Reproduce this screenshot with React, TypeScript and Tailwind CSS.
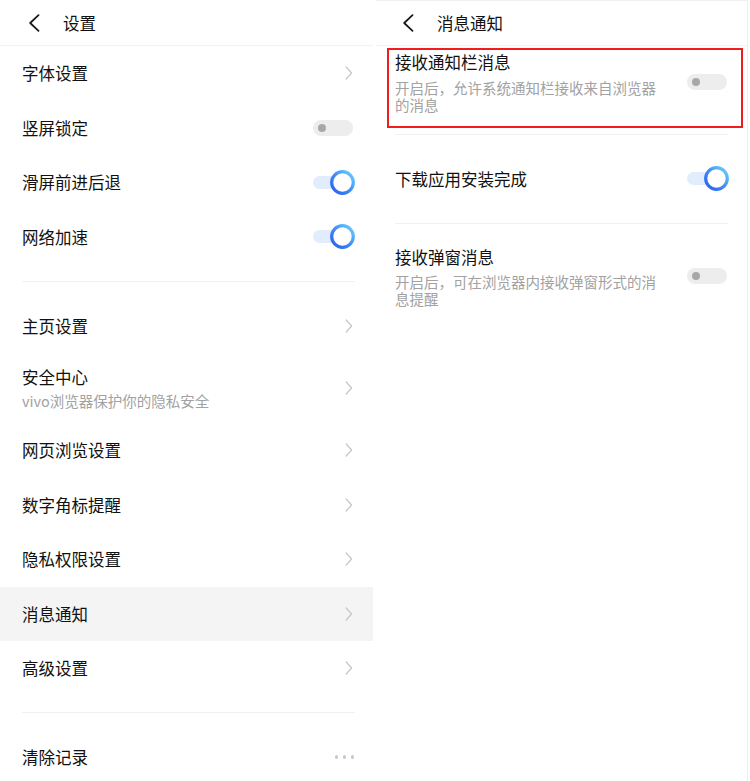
import React, { useId } from "react";

const FONT = { fontFamily: '"Noto Sans CJK SC", "Noto Sans", sans-serif' };

function BackIcon() {
  return (
    <svg width="12" height="18" viewBox="0 0 12 18" fill="none">
      <path d="M10.5 1.2 L2.2 9 L10.5 16.8" stroke="#1a1a1a" strokeWidth="1.8" strokeLinecap="round" strokeLinejoin="round" />
    </svg>
  );
}

function Chevron() {
  return (
    <svg width="8" height="14" viewBox="0 0 8 14" fill="none">
      <path d="M1.2 1 L6.6 7 L1.2 13" stroke="#c6c6c6" strokeWidth="1.2" strokeLinecap="round" strokeLinejoin="round" />
    </svg>
  );
}

function Dots() {
  return (
    <div className="flex items-center gap-[4.5px]">
      <span className="w-[3.5px] h-[3.5px] rounded-full bg-[#cacaca]" />
      <span className="w-[3.5px] h-[3.5px] rounded-full bg-[#cacaca]" />
      <span className="w-[3.5px] h-[3.5px] rounded-full bg-[#cacaca]" />
    </div>
  );
}

function ToggleOff() {
  return (
    <div className="w-[40px] h-[16px] rounded-full bg-[#ededed] flex items-center pl-[5px]">
      <span className="w-[8px] h-[8px] rounded-full bg-[#a8a8a8]" />
    </div>
  );
}

function ToggleOn() {
  const id = useId().replace(/:/g, "");
  return (
    <div className="relative w-[40px] h-[25px] flex items-center">
      <div className="w-[32px] h-[13px] rounded-full bg-[#e1ecfd]" />
      <svg className="absolute right-[-2px] top-0" width="25" height="25" viewBox="0 0 25 25">
        <defs>
          <linearGradient id={`g${id}`} x1="1" y1="0" x2="0" y2="1">
            <stop offset="0" stopColor="#6ad6ff" />
            <stop offset="0.5" stopColor="#3f8df7" />
            <stop offset="1" stopColor="#2a5cf0" />
          </linearGradient>
        </defs>
        <circle cx="12.5" cy="12.5" r="10.8" fill="#fff" stroke={`url(#g${id})`} strokeWidth="3.2" />
      </svg>
    </div>
  );
}

function Row({
  title,
  sub,
  right,
  highlight,
  tall,
}: {
  title: string;
  sub?: string;
  right: React.ReactNode;
  highlight?: boolean;
  tall?: boolean;
}) {
  return (
    <div
      className={`${tall ? "h-[70px]" : "h-[54.5px]"} pl-[22px] pr-[20px] flex items-center justify-between ${
        highlight ? "bg-[#f4f4f4]" : ""
      }`}
    >
      <div className="flex flex-col">
        <span className="text-[16.5px] leading-[22px] text-[#111111]">{title}</span>
        {sub && <span className="text-[14.5px] leading-[20px] mt-[3px] text-[#a2a2a2]">{sub}</span>}
      </div>
      <div className="w-[40px] flex justify-end items-center">{right}</div>
    </div>
  );
}

function Divider() {
  return <div className="ml-[22px] mr-[18px] h-px bg-[#f1f1f1]" />;
}

function LeftPanel() {
  return (
    <div className="w-[373px] shrink-0 bg-white">
      <div className="h-[46px] border-b border-[#f3f3f3] flex items-center">
        <div className="ml-[28px] flex items-center">
          <BackIcon />
        </div>
        <span className="ml-[23px] text-[16.5px] leading-[22px] text-[#111111]">设置</span>
      </div>
      <Row title="字体设置" right={<Chevron />} />
      <Row title="竖屏锁定" right={<ToggleOff />} />
      <Row title="滑屏前进后退" right={<ToggleOn />} />
      <Row title="网络加速" right={<ToggleOn />} />
      <div className="mt-[16.5px]" />
      <Divider />
      <div className="mt-[17px]" />
      <Row title="主页设置" right={<Chevron />} />
      <Row title="安全中心" sub="vivo浏览器保护你的隐私安全" tall right={<Chevron />} />
      <Row title="网页浏览设置" right={<Chevron />} />
      <Row title="数字角标提醒" right={<Chevron />} />
      <Row title="隐私权限设置" right={<Chevron />} />
      <Row title="消息通知" highlight right={<Chevron />} />
      <Row title="高级设置" right={<Chevron />} />
      <div className="mt-[16px]" />
      <Divider />
      <div className="mt-[17px]" />
      <div className="h-[54.5px] pl-[22px] pr-[19px] flex items-center justify-between">
        <span className="text-[16.5px] leading-[22px] text-[#111111]">清除记录</span>
        <Dots />
      </div>
    </div>
  );
}

function RightItem({
  title,
  sub,
  right,
  pt,
}: {
  title: string;
  sub?: string;
  right: React.ReactNode;
  pt: string;
}) {
  return (
    <div className={`pl-[19px] pr-[20px] ${pt} flex items-center justify-between`}>
      <div className="flex flex-col">
        <span className="text-[16.5px] leading-[22px] text-[#111111]">{title}</span>
        {sub && (
          <span className="mt-[5.5px] w-[268px] text-[14.5px] leading-[17px] text-[#a2a2a2]">{sub}</span>
        )}
      </div>
      <div className="w-[42px] flex justify-end items-center">{right}</div>
    </div>
  );
}

function RightPanel() {
  return (
    <div className="ml-[3px] w-[372px] shrink-0 min-h-[781px] bg-white border-t border-r border-[#efefef]">
      <div className="h-[45px] border-b border-[#f3f3f3] flex items-center">
        <div className="ml-[26px] flex items-center">
          <BackIcon />
        </div>
        <span className="ml-[23px] text-[16.5px] leading-[22px] text-[#111111]">消息通知</span>
      </div>
      <div className="relative">
        <RightItem
          title="接收通知栏消息"
          sub="开启后，允许系统通知栏接收来自浏览器的消息"
          right={<ToggleOff />}
          pt="pt-[5px] pb-[21px]"
        />
        <div className="absolute left-[11px] top-[2px] w-[356px] h-[80px] border-2 border-[#f21c1c]" />
      </div>
      <div className="ml-[19px] mr-[19px] h-px bg-[#f1f1f1]" />
      <div className="h-[88px] pl-[19px] pr-[20px] flex items-center justify-between">
        <span className="text-[16.5px] leading-[22px] text-[#111111]">下载应用安装完成</span>
        <ToggleOn />
      </div>
      <div className="ml-[19px] mr-[19px] h-px bg-[#f1f1f1]" />
      <RightItem
        title="接收弹窗消息"
        sub="开启后，可在浏览器内接收弹窗形式的消息提醒"
        right={<ToggleOff />}
        pt="pt-[22px] pb-[20px]"
      />
    </div>
  );
}

export default function App() {
  return (
    <div className="w-[750px] h-[781px] overflow-hidden bg-white flex" style={FONT}>
      <LeftPanel />
      <RightPanel />
    </div>
  );
}
